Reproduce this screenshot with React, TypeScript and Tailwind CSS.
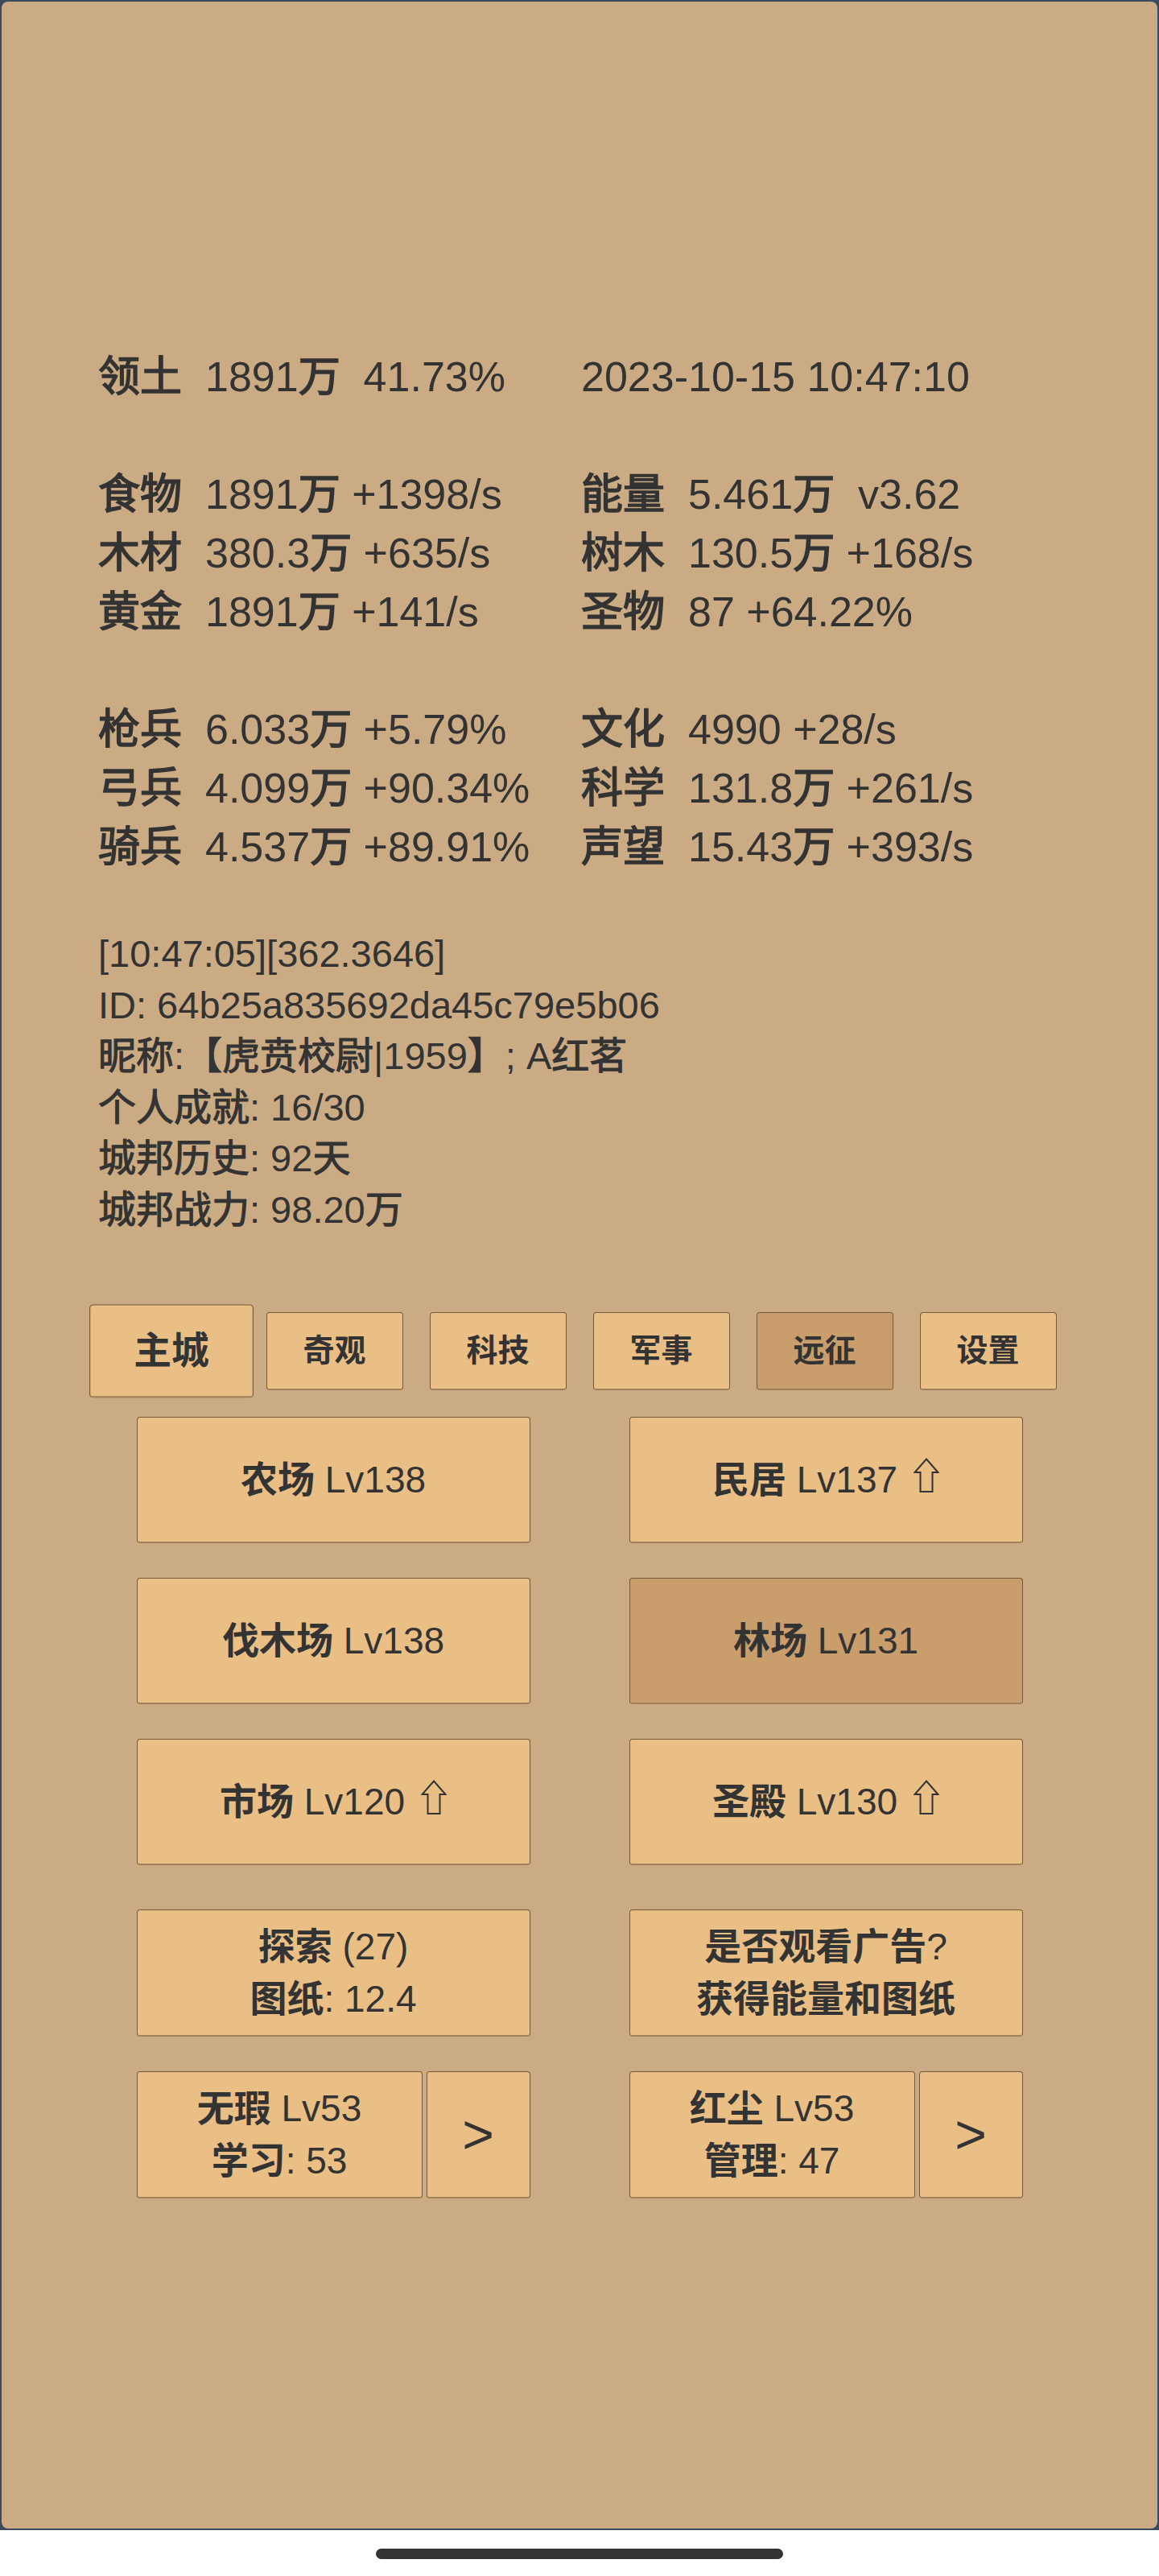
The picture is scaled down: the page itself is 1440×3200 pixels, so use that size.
import React from "react";

const CJK_RE = /([\u2e80-\u9fff\u3000-\u303f\uff00-\uffef]+)/;

// wraps the CJK runs of a string so they get their own weight
function Mixed({ text, cjk }: { text: string; cjk: string }) {
  const parts = text.split(CJK_RE);
  return (
    <>
      {parts.map((p, i) =>
        i % 2 === 1 ? (
          <span key={i} className={cjk}>
            {p}
          </span>
        ) : (
          p
        )
      )}
    </>
  );
}

type Stat = [string | null, string];

const statRows: ([Stat, Stat] | null)[] = [
  [["领土", "1891万  41.73%"], [null, "2023-10-15 10:47:10"]],
  null,
  [["食物", "1891万 +1398/s"], ["能量", "5.461万  v3.62"]],
  [["木材", "380.3万 +635/s"], ["树木", "130.5万 +168/s"]],
  [["黄金", "1891万 +141/s"], ["圣物", "87 +64.22%"]],
  null,
  [["枪兵", "6.033万 +5.79%"], ["文化", "4990 +28/s"]],
  [["弓兵", "4.099万 +90.34%"], ["科学", "131.8万 +261/s"]],
  [["骑兵", "4.537万 +89.91%"], ["声望", "15.43万 +393/s"]],
];

const infoLines = [
  "[10:47:05][362.3646]",
  "ID: 64b25a835692da45c79e5b06",
  "昵称:【虎贲校尉|1959】; A红茗",
  "个人成就: 16/30",
  "城邦历史: 92天",
  "城邦战力: 98.20万",
];

const tabs = [
  { name: "主城", active: true },
  { name: "奇观" },
  { name: "科技" },
  { name: "军事" },
  { name: "远征", dark: true },
  { name: "设置" },
];

const buildings = [
  { name: "农场 Lv138" },
  { name: "民居 Lv137", up: true },
  { name: "伐木场 Lv138" },
  { name: "林场 Lv131", dark: true },
  { name: "市场 Lv120", up: true },
  { name: "圣殿 Lv130", up: true },
];

const frame =
  "rounded-[4px] border border-[#76593a] border-b-2 border-b-[#a08058] text-[#333]";

// medium-ish CJK weight: regular face with a thin stroke
const cjkStat = "[-webkit-text-stroke:1.6px_#333333]";
const cjkInfo = "[-webkit-text-stroke:1.1px_#333333]";

function StatCell({ stat }: { stat: Stat }) {
  const [label, value] = stat;
  return (
    <div className="flex w-[600px] whitespace-pre">
      {label && (
        <span className="w-[133px]">
          <span className={cjkStat}>{label}</span>
        </span>
      )}
      <span>
        <Mixed text={value} cjk={cjkStat} />
      </span>
    </div>
  );
}

function UpArrow() {
  return (
    <svg
      width="32"
      height="43"
      viewBox="0 0 32 43"
      className="ml-[20px] inline-block align-[-2px]"
    >
      <polygon
        points="16,1.5 30.5,18 23.5,18 23.5,42 8.5,42 8.5,18 1.5,18"
        fill="none"
        stroke="#333"
        strokeWidth="2"
      />
    </svg>
  );
}

function Btn({
  children,
  dark,
  className = "",
}: {
  children: React.ReactNode;
  dark?: boolean;
  className?: string;
}) {
  return (
    <div
      className={`flex flex-col items-center justify-center text-[46px] leading-[65px] ${frame} ${
        dark ? "bg-[#c99d6c]" : "bg-[#eabf85]"
      } ${className}`}
    >
      {children}
    </div>
  );
}

function Line({ text }: { text: string }) {
  return (
    <div className="whitespace-pre">
      <Mixed text={text} cjk="font-bold" />
    </div>
  );
}

export default function App() {
  return (
    <div className="flex h-[3200px] w-[1440px] flex-col bg-white font-['Liberation_Sans','Noto_Sans_CJK_SC',sans-serif] text-[#333]">
      <div className="h-[3143px] bg-[#3b4a5d] p-[2px]">
        <div className="h-full rounded-[8px] bg-[#cbab83] pt-[430px]">
          {/* resources */}
          <div className="pl-[120px] text-[52px] leading-[73px]">
            {statRows.map((row, i) =>
              row ? (
                <div key={i} className="flex h-[73px]">
                  <StatCell stat={row[0]} />
                  <StatCell stat={row[1]} />
                </div>
              ) : (
                <div key={i} className="h-[73px]" />
              )
            )}
          </div>

          {/* player info */}
          <div className="mt-[64px] pl-[120px] text-[47px] leading-[63.5px]">
            {infoLines.map((l) => (
              <div key={l} className="whitespace-pre">
                <Mixed text={l} cjk={cjkInfo} />
              </div>
            ))}
          </div>

          {/* tabs */}
          <div className="mt-[96px] flex justify-center gap-[33px]">
            {tabs.map((t) => (
              <div
                key={t.name}
                className={`flex h-[97px] w-[170px] items-center justify-center text-[39px] font-bold ${frame} ${
                  t.dark ? "bg-[#c99d6c]" : "bg-[#eabf85]"
                } ${t.active ? "scale-[1.2]" : ""}`}
              >
                {t.name}
              </div>
            ))}
          </div>

          {/* buildings */}
          <div className="mt-[33px] grid grid-cols-[489px_489px] justify-center gap-x-[123px] gap-y-[43px]">
            {buildings.map((b) => (
              <Btn key={b.name} dark={b.dark} className="h-[157px]">
                <div className="flex items-baseline whitespace-pre">
                  <Mixed text={b.name} cjk="font-bold" />
                  {b.up && <UpArrow />}
                </div>
              </Btn>
            ))}
          </div>

          <div className="mt-[55px] grid grid-cols-[489px_489px] justify-center gap-x-[123px] gap-y-[43px]">
            <Btn className="h-[158px]">
              <Line text="探索 (27)" />
              <Line text="图纸: 12.4" />
            </Btn>
            <Btn className="h-[158px]">
              <Line text="是否观看广告?" />
              <Line text="获得能量和图纸" />
            </Btn>
            <div className="flex h-[158px] gap-[5px]">
              <Btn className="w-[355px]">
                <Line text="无瑕 Lv53" />
                <Line text="学习: 53" />
              </Btn>
              <Btn className="flex-1 text-[68px]">&gt;</Btn>
            </div>
            <div className="flex h-[158px] gap-[5px]">
              <Btn className="w-[355px]">
                <Line text="红尘 Lv53" />
                <Line text="管理: 47" />
              </Btn>
              <Btn className="flex-1 text-[68px]">&gt;</Btn>
            </div>
          </div>
        </div>
      </div>

      {/* home indicator */}
      <div className="flex flex-1 justify-center pt-[23px]">
        <div className="h-[13px] w-[506px] rounded-full bg-[#333]" />
      </div>
    </div>
  );
}
